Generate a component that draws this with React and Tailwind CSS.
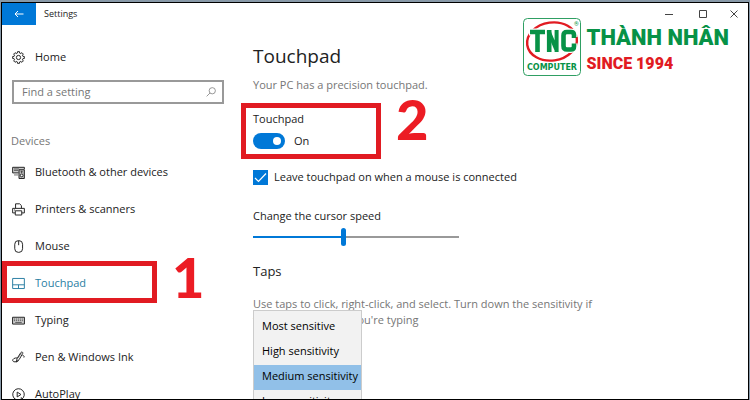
import React, { useState } from 'react';

const gearPoints = () => {
  const pts = [];
  for (let i = 0; i < 8; i++) {
    const base = (i * Math.PI) / 4;
    [[-0.26, 5.6], [-0.17, 7.3], [0.17, 7.3], [0.26, 5.6]].forEach(([a, r]) => {
      pts.push(`${(8 + r * Math.sin(base + a)).toFixed(2)},${(8 - r * Math.cos(base + a)).toFixed(2)}`);
    });
  }
  return pts.join(' ');
};

const Icon = ({ children, className = 'w-[13px] h-[13px]' }) => (
  <svg viewBox="0 0 16 16" fill="none" stroke="currentColor" strokeWidth="1.2" className={`shrink-0 ${className}`} aria-hidden="true">
    {children}
  </svg>
);

const GearIcon = () => (
  <Icon>
    <polygon points={gearPoints()} strokeLinejoin="round" />
    <circle cx="8" cy="8" r="2.6" />
  </Icon>
);

const DevicesIcon = () => (
  <Icon>
    <path d="M8 8.5H.8V1.6h14.4V4" fill="#ccc" />
    <path d="M2.5 3.6h6M2.5 5.4h5M2.5 11h5" strokeWidth=".8" />
    <path d="M8.6 4.6h6.6v10.8H8.6z" fill="#bbb" />
    <circle cx="11.9" cy="11.6" r="1.7" fill="#fff" />
    <circle cx="11.9" cy="7.2" r=".7" />
  </Icon>
);

const PrinterIcon = () => (
  <Icon>
    <path d="M4.4 6.6V1h5l2.2 2.2v3.4" />
    <path d="M4 12.2H.8V6.6h14.4v5.6H12" />
    <path d="M4 9.6h8v5.2H4zM2.6 8.6h1.2" />
  </Icon>
);

const MouseIcon = () => (
  <Icon>
    <rect x="3.4" y=".8" width="9.6" height="14.4" rx="4.4" />
    <path d="M8.2 1v5.4" />
  </Icon>
);

const TouchpadIcon = () => (
  <Icon>
    <path d="M.8 1.8h14.4v12.4H.8zM.8 9.6h14.4M8 9.6v4.6" />
  </Icon>
);

const KeyboardIcon = () => (
  <Icon>
    <path d="M.7 4h14.6v8.4H.7z" fill="#ccc" />
    <path d="M2.4 6.2h11.4M2.4 8.2h11.4" strokeWidth=".8" strokeDasharray="1.4 1" />
    <path d="M4 10.4h8" strokeWidth=".8" />
  </Icon>
);

const PenIcon = () => (
  <Icon>
    <path d="M5.2 13.6 6.4 9 11 1.8c1-1.2 2.8-.2 2.2 1.2L8.8 10.6z" strokeLinejoin="round" />
    <path d="M6.6 8.6C3 8 .4 10.2.9 12c.6 2 4.5 1.8 7.2-.2M13 5.6c2 .2 2.6 1.4 1.6 2.4" />
    <path d="M7.4 8.8 11.6 2.6" strokeWidth=".6" />
  </Icon>
);

const AutoPlayIcon = () => (
  <Icon>
    <path d="M5 14.4A7.1 7.1 0 1 1 11.6 14.1" />
    <path d="M6.4 5v6l4.6-3zM11.4 11.4v3.2h3.2" />
  </Icon>
);

const MENU = [
  { label: 'Bluetooth & other devices', icon: DevicesIcon },
  { label: 'Printers & scanners', icon: PrinterIcon },
  { label: 'Mouse', icon: MouseIcon },
  { label: 'Touchpad', icon: TouchpadIcon, active: true },
  { label: 'Typing', icon: KeyboardIcon },
  { label: 'Pen & Windows Ink', icon: PenIcon },
  { label: 'AutoPlay', icon: AutoPlayIcon },
];

const SENSITIVITY = ['Most sensitive', 'High sensitivity', 'Medium sensitivity', 'Low sensitivity'];

function TitleBar() {
  return (
    <header className="flex h-[22px] shrink-0 items-stretch text-[9px]">
      <button aria-label="Back" className="flex w-[34px] items-center justify-center bg-[#0078d7] text-white">
        <svg viewBox="0 0 10 8" className="w-[10px] h-2" fill="none" stroke="currentColor" strokeWidth="1">
          <path d="M9.5 4H1M4 1 1 4l3 3" />
        </svg>
      </button>
      <h1 className="flex items-center pl-2">Settings</h1>
      <div className="ml-auto flex items-center text-[#444]">
        <button aria-label="Minimize" className="flex w-[34px] justify-center">
          <svg viewBox="0 0 8 8" className="w-2 h-2" stroke="currentColor"><path d="M0 4.5h8" /></svg>
        </button>
        <button aria-label="Maximize" className="flex w-[34px] justify-center">
          <svg viewBox="0 0 8 8" className="w-2 h-2" fill="none" stroke="currentColor"><path d="M.5.5h7v7h-7z" /></svg>
        </button>
        <button aria-label="Close" className="flex w-[28px] justify-center">
          <svg viewBox="0 0 8 8" className="w-2 h-2" stroke="currentColor"><path d="m.5.5 7 7m0-7-7 7" /></svg>
        </button>
      </div>
    </header>
  );
}

function Sidebar() {
  return (
    <nav className="w-[232px] shrink-0 text-[11px]">
      <a href="#home" className="ml-[10px] mt-5 flex h-6 items-center gap-[10px]">
        <GearIcon />
        Home
      </a>
      <div className="ml-[10px] mt-[11px] flex h-6 w-[212px] items-center border-2 border-[#999] pl-2 pr-[6px]">
        <input
          type="text"
          aria-label="Find a setting"
          placeholder="Find a setting"
          className="min-w-0 flex-1 bg-transparent outline-none placeholder:text-[#767676]"
        />
        <Icon className="w-[10px] h-[10px] text-[#777]">
          <circle cx="10" cy="6" r="5" />
          <path d="M6.5 9.5 1 15" />
        </Icon>
      </div>
      <h2 className="ml-[9px] mt-[29px] h-4 leading-4 text-[#767676]">Devices</h2>
      <ul className="mt-[5px]">
        {MENU.map(({ label, icon: ItemIcon, active }) => (
          <li key={label} className="relative">
            <a href="#menu" className={`flex h-[37px] items-center gap-[10px] pl-[10px] ${active ? 'text-[#2a7ea3]' : ''}`}>
              <ItemIcon />
              {label}
            </a>
            {active && (
              <>
                <span className="pointer-events-none absolute left-0 -top-1 h-[42px] w-[155px] border-[5px] border-[#e11b22]" />
                <span className="absolute left-[170px] -top-2 font-['Lato',sans-serif] text-[56px] font-black leading-[40px] text-[#ec1c24]">1</span>
              </>
            )}
          </li>
        ))}
      </ul>
    </nav>
  );
}

function Logo() {
  return (
    <div className="absolute right-[19px] top-[15px] flex gap-[6px] font-['Roboto',sans-serif] font-black">
      <svg viewBox="0 0 58 58" className="h-[58px] w-[58px]">
        <rect x=".5" y=".5" width="57" height="57" rx="4" fill="#fff" stroke="#2f9f63" />
        <ellipse cx="29" cy="23.5" rx="25" ry="19" fill="none" stroke="#e11b22" strokeWidth="2.4" transform="rotate(-8 29 23.5)" />
        <g stroke="#fff" strokeWidth="7" fill="none">
          <path d="M6 14h17M14.5 12v22M26.2 34V13l7.6 18V12M51 19v-2q0-3-3-3h-4q-3.5 0-3.5 3.5V28q0 3.5 3.5 3.5h4q3 0 3-3v-3" />
        </g>
        <g stroke="#079247" strokeWidth="4.6" fill="none">
          <path d="M7 14h15M14.5 13v21M26.2 34V12" />
          <path d="M25.5 13l8 19M33.6 34V12" strokeWidth="4" />
          <path d="M51 20v-3q0-3-3-3h-4q-3.5 0-3.5 3.5V28q0 3.5 3.5 3.5h4q3 0 3-3v-3" />
        </g>
        <text x="29" y="52" textAnchor="middle" fontFamily="DejaVu Sans, sans-serif" fontSize="8" fontWeight="700" fill="#079247">COMPUTER</text>
        <text x="51" y="8" fontFamily="Roboto, sans-serif" fontSize="6" fontWeight="400" fill="#079247">®</text>
      </svg>
      <div className="pt-2">
        <p className="text-[22px] leading-6 text-[#079247]">THÀNH NHÂN</p>
        <p className="mt-[3px] text-[16px] leading-[22px] text-[#e11b22]">SINCE 1994</p>
      </div>
    </div>
  );
}

function TouchpadPage() {
  const [enabled, setEnabled] = useState(true);
  const [leaveOn, setLeaveOn] = useState(true);
  const [speed, setSpeed] = useState(44);
  const [level, setLevel] = useState(SENSITIVITY[2]);

  return (
    <main className="min-w-0 flex-1 pl-[19px] text-[11px]">
      <h2 className="mt-[15px] text-[19px] leading-8">Touchpad</h2>
      <p className="mt-[5px] leading-4 text-[#767676]">Your PC has a precision touchpad.</p>

      <div className="relative mt-[18px] w-fit">
        <p className="leading-4" id="touchpad-label">Touchpad</p>
        <label className="mt-[6px] flex h-4 w-fit items-center gap-[9px]">
          <input
            type="checkbox"
            role="switch"
            aria-labelledby="touchpad-label"
            checked={enabled}
            onChange={(e) => setEnabled(e.target.checked)}
            className="peer sr-only"
          />
          <span className="flex h-4 w-8 items-center rounded-full bg-[#999] px-1 peer-checked:justify-end peer-checked:bg-[#0078d7]">
            <span className="h-2 w-2 rounded-full bg-white" />
          </span>
          <span>{enabled ? 'On' : 'Off'}</span>
        </label>
        <span className="pointer-events-none absolute -left-3 -top-2 h-[56px] w-[140px] border-[5px] border-[#e11b22]" />
        <span className="absolute left-[143px] -top-3 font-['Lato',sans-serif] text-[56px] font-black leading-[40px] text-[#ec1c24]">2</span>
      </div>

      <label className="mt-5 flex h-4 w-fit items-center gap-[6px]">
        <span className="grid h-[15px] w-[15px]">
          <input
            type="checkbox"
            checked={leaveOn}
            onChange={(e) => setLeaveOn(e.target.checked)}
            className="peer col-start-1 row-start-1 appearance-none border border-[#0078d7] checked:bg-[#0078d7]"
          />
          <svg viewBox="0 0 15 15" className="pointer-events-none invisible col-start-1 row-start-1 text-white peer-checked:visible" fill="none" stroke="currentColor" strokeWidth="1.2">
            <path d="m2 8 3.5 3.5L13 3.5" />
          </svg>
        </span>
        Leave touchpad on when a mouse is connected
      </label>

      <label htmlFor="speed" className="mt-[23px] block leading-4">Change the cursor speed</label>
      <input
        id="speed"
        type="range"
        value={speed}
        onChange={(e) => setSpeed(Number(e.target.value))}
        style={{ backgroundImage: `linear-gradient(to right, #0078d7 ${speed}%, #999 ${speed}%)` }}
        className="mt-1 block h-[18px] w-[206px] appearance-none bg-[length:100%_2px] bg-center bg-no-repeat [&::-webkit-slider-thumb]:h-[18px] [&::-webkit-slider-thumb]:w-[5px] [&::-webkit-slider-thumb]:appearance-none [&::-webkit-slider-thumb]:rounded-full [&::-webkit-slider-thumb]:bg-[#0078d7]"
      />

      <h3 className="mt-[14px] text-[13px] leading-[22px]">Taps</h3>
      <div className="relative mt-[14px] max-w-[348px]">
        <p className="leading-4 text-[#767676]">
          Use taps to click, right-click, and select. Turn down the sensitivity if they activate when you&apos;re typing
        </p>
        <select
          size={4}
          aria-label="Touchpad sensitivity"
          value={level}
          onChange={(e) => setLevel(e.target.value)}
          className="absolute left-0 top-[14px] w-[109px] overflow-hidden border border-[#ccc] bg-[#f2f2f2] py-1 outline-none"
        >
          {SENSITIVITY.map((s) => (
            <option key={s} value={s} className="h-[25px] px-2 pb-0 pt-[3px] text-black checked:bg-[linear-gradient(#91c0e8,#91c0e8)]">
              {s}
            </option>
          ))}
        </select>
      </div>
    </main>
  );
}

export default function App() {
  return (
    <div className="flex h-screen flex-col overflow-hidden border-x border-t-2 border-[#8899a8] font-['Open_Sans','Noto_Sans',sans-serif] text-[#222]">
      <div className="relative flex min-h-0 flex-1 flex-col overflow-hidden border border-black bg-white">
        <TitleBar />
        <div className="flex min-h-0 flex-1">
          <Sidebar />
          <TouchpadPage />
        </div>
        <Logo />
      </div>
    </div>
  );
}
